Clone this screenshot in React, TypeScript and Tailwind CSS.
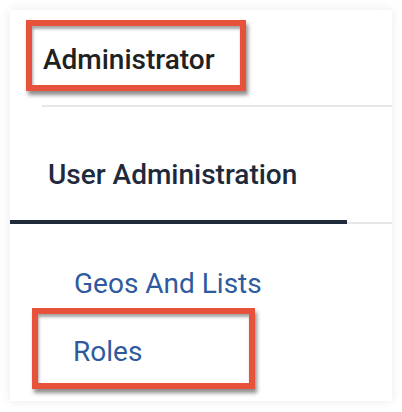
const links = ["Geos And Lists"];

const boxShadow =
  "shadow-[inset_1px_3px_3px_rgba(0,0,0,0.35),2px_4px_4px_rgba(0,0,0,0.45)]";

export default function App() {
  return (
    <div className="min-h-[412px] bg-white p-[10px] font-['Roboto',sans-serif]">
      <div className="h-[391px] w-[382px] bg-white shadow-[0_0_10px_rgba(0,0,0,0.09)]">
        {/* header */}
        <div className="pl-[16px] pt-[10px]">
          <div
            className={`w-[220px] border-[6px] border-[#e8513a] pb-[9px] pl-[11px] pt-[18px] ${boxShadow}`}
          >
            <h1 className="text-[28px] font-medium leading-[32px] text-[#212121]">
              Administrator
            </h1>
          </div>
        </div>
        <div className="ml-[32px] mt-[14px] h-[2px] bg-[#e6e6e6]" />

        {/* tabs */}
        <div className="mt-[52px] border-b-2 border-[#e5e7eb]">
          <div className="-mb-[2px] w-[337px] border-b-4 border-[#1f2a3a] pb-[29px] pl-[38px]">
            <span className="text-[28px] font-medium leading-[32px] text-[#1e2a3b]">
              User Administration
            </span>
          </div>
        </div>

        {/* links */}
        <div className="mt-[44px] flex flex-col">
          {links.map((l) => (
            <a
              key={l}
              className="pl-[64px] text-[28px] leading-[32px] text-[#2f5a9e]"
            >
              {l}
            </a>
          ))}
          <div
            className={`ml-[22px] mt-[8px] w-[223px] border-[6px] border-[#e8513a] pb-[15px] pl-[35px] pt-[22px] ${boxShadow}`}
          >
            <a className="text-[28px] leading-[32px] text-[#2f5a9e]">Roles</a>
          </div>
        </div>
      </div>
    </div>
  );
}
